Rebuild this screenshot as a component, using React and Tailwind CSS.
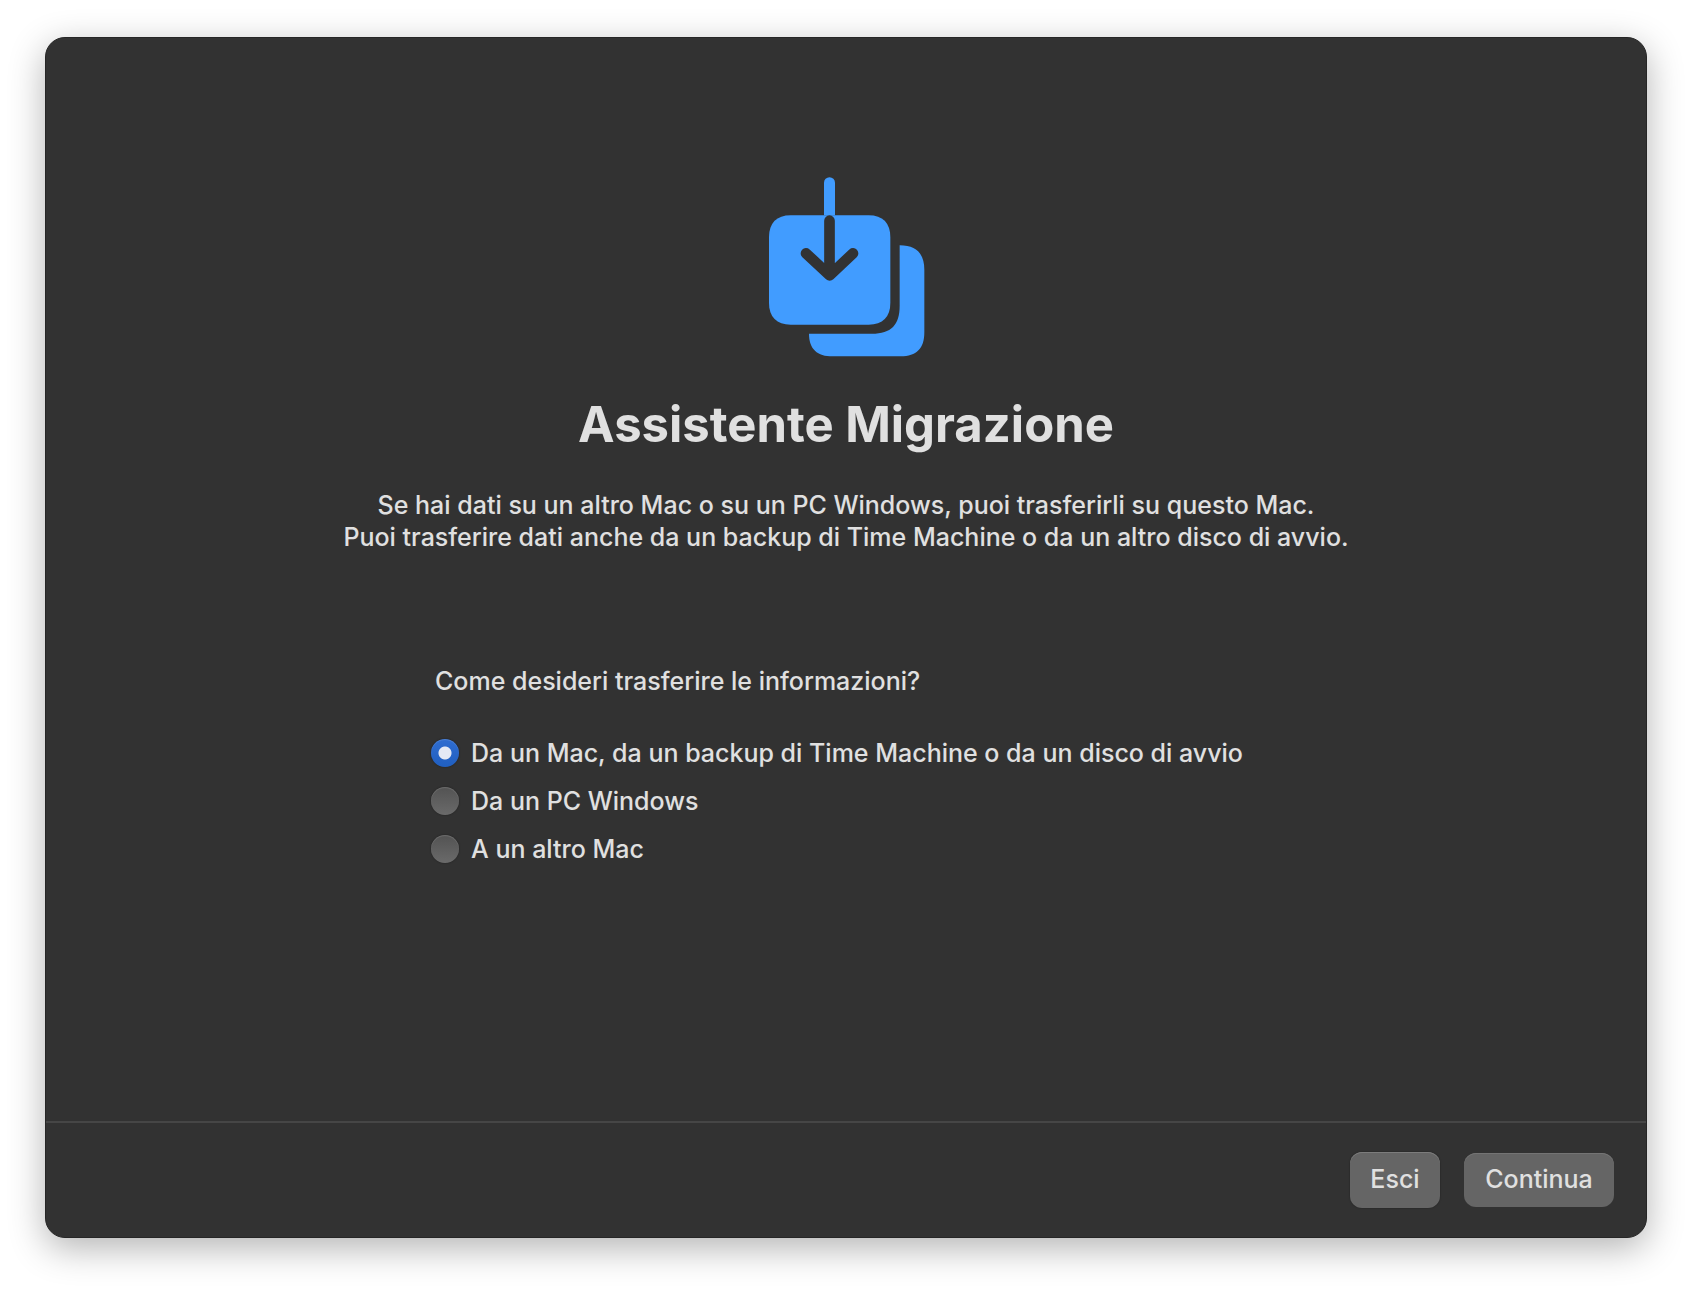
import { useState } from 'react';

const options = [
  { id: 'mac', label: 'Da un Mac, da un backup di Time Machine o da un disco di avvio' },
  { id: 'windows', label: 'Da un PC Windows' },
  { id: 'other', label: 'A un altro Mac' },
];

function MigrationIcon() {
  return (
    <svg viewBox="51 50 474 540" className="h-[180px] w-[158px] shrink-0" aria-hidden="true">
      {/* Asta */}
      <path d="M222 165V67a16.5 16.5 0 0 1 33 0v98z" fill="#419cff" />
      {/* Riquadro dietro */}
      <path d="M449 255C500 255 523 281 523 328V516C523 565 500 588 452 588H248C202 588 177 566 177 520H366C424 520 449 493 449 436Z" fill="#419cff" />
      {/* Riquadro davanti */}
      <path d="M57 230C57 188 80 165 122 165H356C398 165 421 188 421 230V428C421 470 398 493 356 493H122C80 493 57 470 57 428Z" fill="#419cff" />
      <path d="M238.500 181V335M168 279L239 345L309 279" fill="none" stroke="#323232" strokeWidth="32" strokeLinecap="round" strokeLinejoin="round" />
    </svg>
  );
}

export default function App() {
  const [source, setSource] = useState('mac');

  return (
    <div className="min-h-screen flex bg-white px-[45px] pt-[37px] pb-[54px] font-[Inter,sans-serif] text-[25px] leading-8 font-medium text-[#e0e0e0]">
      <div className="flex-1 flex flex-col rounded-[20px] bg-[#323232] border border-[#262626] shadow-[0_10px_36px_rgba(0,0,0,0.3)]">
        <main className="flex-1 flex flex-col items-center px-8 pt-[139px]">
          <MigrationIcon />
          <h1 className="mt-9 text-[49px] leading-[64px] font-bold text-center">Assistente Migrazione</h1>
          <p className="mt-8 text-center">
            Se hai dati su un altro Mac o su un PC Windows, puoi trasferirli su questo Mac.
            <br />
            Puoi trasferire dati anche da un backup di Time Machine o da un altro disco di avvio.
          </p>

          <fieldset className="mt-28 w-[830px] max-w-full">
            <legend className="px-1">Come desideri trasferire le informazioni?</legend>
            <div className="mt-8 flex flex-col">
              {options.map((o) => (
                <label key={o.id} htmlFor={o.id} className="flex min-h-12 items-center gap-3">
                  <input
                    id={o.id}
                    type="radio"
                    name="source"
                    checked={source === o.id}
                    onChange={() => setSource(o.id)}
                    className="size-7 shrink-0 appearance-none rounded-full bg-linear-to-b from-[#535353] to-[#6a6a6a] shadow-[inset_0_1px_1px_rgba(255,255,255,0.15),0_0_2px_rgba(0,0,0,0.4)] checked:bg-[radial-gradient(circle,#e4e9f4_6px,transparent_7px),linear-gradient(#2f6dd0,#205fc0)]"
                  />
                  {o.label}
                </label>
              ))}
            </div>
          </fieldset>
        </main>

        <footer className="flex items-center justify-end gap-6 border-t-2 border-[#464646] px-8 py-[29px]">
          <button type="button" className="h-14 min-w-[90px] rounded-xl bg-[#656565] px-5 pb-0.5 shadow-[inset_0_1px_0_#7c7c7c,0_0_2px_rgba(0,0,0,0.4)]">Esci</button>
          <button type="button" className="h-[54px] min-w-[150px] rounded-xl bg-[#656565] px-5 pb-0.5 shadow-[inset_0_1px_0_#747474]">Continua</button>
        </footer>
      </div>
    </div>
  );
}
